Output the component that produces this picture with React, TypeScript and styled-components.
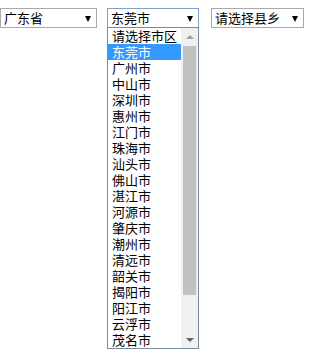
import styled, { createGlobalStyle } from 'styled-components'

const GlobalStyle = createGlobalStyle`
  html, body, #root {
    height: 100%;
  }
  body {
    margin: 0;
    background: #ffffff;
    font-family: "Noto Sans CJK SC", "Liberation Sans", sans-serif;
  }
`

const cities = [
  '请选择市区', '东莞市', '广州市', '中山市', '深圳市', '惠州市', '江门市',
  '珠海市', '汕头市', '佛山市', '湛江市', '河源市', '肇庆市', '潮州市',
  '清远市', '韶关市', '揭阳市', '阳江市', '云浮市', '茂名市',
]

const Page = styled.div`
  display: flex;
  align-items: flex-start;
  padding-top: 8px;
`

const SelectWrap = styled.div<{ $gap: number }>`
  display: flex;
  flex-direction: column;
  margin-left: ${p => p.$gap}px;
`

const SelectBox = styled.div<{ $width: number; $focused?: boolean }>`
  box-sizing: border-box;
  width: ${p => p.$width}px;
  height: 20px;
  border: 1px solid ${p => p.$focused ? '#7da2ce' : '#a9a9a9'};
  background: #fff;
  display: flex;
  align-items: center;
  justify-content: space-between;
  padding: 0 5px 0 3px;
  font-size: 13px;
  line-height: 18px;
  color: #000;
`

const Label = styled.span`
  white-space: nowrap;
`

const Arrow = styled.span`
  width: 0;
  height: 0;
  border-left: 3.5px solid transparent;
  border-right: 3.5px solid transparent;
  border-top: 6px solid #000;
  margin-top: 1px;
`

const ListBox = styled.div`
  margin-top: -1px;
  box-sizing: border-box;
  width: 92px;
  height: 322px;
  border: 1px solid #7a8a9e;
  background: #fff;
  display: flex;
`

const Options = styled.div`
  flex: 1;
  display: flex;
  flex-direction: column;
`

const Option = styled.div<{ $selected?: boolean }>`
  height: 16px;
  line-height: 16px;
  padding-left: 4px;
  font-size: 13px;
  white-space: nowrap;
  color: ${p => p.$selected ? '#fff' : '#000'};
  background: ${p => p.$selected ? '#3399ff' : 'transparent'};
`

const Scrollbar = styled.div`
  width: 17px;
  flex: none;
  background: #f0f0f0;
  display: flex;
  flex-direction: column;
`

const ScrollButton = styled.div`
  height: 17px;
  flex: none;
  display: flex;
  align-items: center;
  justify-content: center;
`

const SmallArrow = styled.span<{ $up?: boolean }>`
  width: 0;
  height: 0;
  border-left: 4px solid transparent;
  border-right: 4px solid transparent;
  ${p => p.$up ? 'border-bottom: 4px solid #a3a3a3;' : 'border-top: 4px solid #606060;'}
`

const Track = styled.div`
  flex: 1;
  padding: 1px 2px;
`

const Thumb = styled.div`
  height: 249px;
  background: #c1c1c1;
`

export default function App() {
  return (
    <>
      <GlobalStyle />
      <Page>
        <SelectWrap $gap={0}>
          <SelectBox $width={97}>
            <Label>广东省</Label>
            <Arrow />
          </SelectBox>
        </SelectWrap>
        <SelectWrap $gap={10}>
          <SelectBox $width={92} $focused>
            <Label>东莞市</Label>
            <Arrow />
          </SelectBox>
          <ListBox>
            <Options>
              {cities.map((c, i) => (
                <Option key={c} $selected={i === 1}>{c}</Option>
              ))}
            </Options>
            <Scrollbar>
              <ScrollButton><SmallArrow $up /></ScrollButton>
              <Track><Thumb /></Track>
              <ScrollButton><SmallArrow /></ScrollButton>
            </Scrollbar>
          </ListBox>
        </SelectWrap>
        <SelectWrap $gap={12}>
          <SelectBox $width={93}>
            <Label>请选择县乡</Label>
            <Arrow />
          </SelectBox>
        </SelectWrap>
      </Page>
    </>
  )
}
